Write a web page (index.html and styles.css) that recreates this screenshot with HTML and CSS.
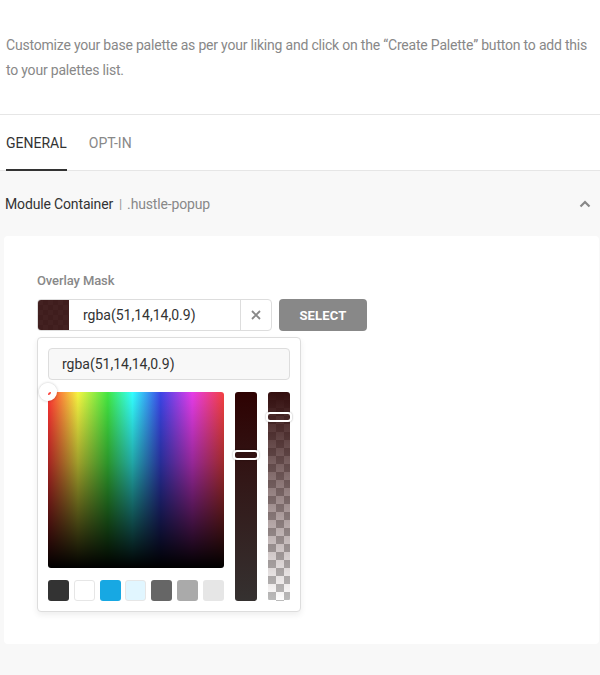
FILE: index.html
```html
<!DOCTYPE html>
<html lang="en">
<head>
<meta charset="utf-8">
<title>Palette</title>
<link rel="stylesheet" href="styles.css">
</head>
<body>
<div class="intro">
  <p class="desc">Customize your base palette as per your liking and click on the “Create Palette” button to add this to your palettes list.</p>
</div>
<nav class="tabs">
  <span class="tab active">GENERAL</span>
  <span class="tab">OPT-IN</span>
</nav>
<section class="panel">
  <header class="panel-head">
    <span class="panel-title">Module Container</span>
    <span class="sep">|</span>
    <span class="panel-sub">.hustle-popup</span>
    <svg class="chevron" width="12" height="8" viewBox="0 0 12 8"><path d="M1.5 6.5 L6 2 L10.5 6.5" fill="none" stroke="#888" stroke-width="2.2"/></svg>
  </header>
  <div class="box">
    <div class="label">Overlay Mask</div>
    <div class="field-row">
      <div class="color-input">
        <span class="swatch"><span class="swatch-fill"></span></span>
        <span class="value">rgba(51,14,14,0.9)</span>
        <span class="clear">
          <svg width="10" height="10" viewBox="0 0 10 10"><path d="M1 1 L9 9 M9 1 L1 9" stroke="#888" stroke-width="1.8"/></svg>
        </span>
      </div>
      <button class="select-btn">SELECT</button>
    </div>
    <div class="popover">
      <div class="pop-input">rgba(51,14,14,0.9)</div>
      <div class="picker">
        <div class="square">
          <span class="sq-handle"></span>
        </div>
        <div class="slider lightness"><span class="s-handle h1"></span></div>
        <div class="slider alpha"><span class="alpha-fill"></span><span class="s-handle h2"></span></div>
        <div class="palette">
          <span class="pal" style="background:#333333"></span>
          <span class="pal white" style="background:#ffffff"></span>
          <span class="pal" style="background:#17a8e3"></span>
          <span class="pal light" style="background:#e1f6ff"></span>
          <span class="pal" style="background:#666666"></span>
          <span class="pal" style="background:#aaaaaa"></span>
          <span class="pal" style="background:#e6e6e6"></span>
        </div>
      </div>
    </div>
  </div>
</section>
</body>
</html>
```

FILE: styles.css
```css
* { box-sizing: border-box; }
html, body { margin: 0; padding: 0; }
body {
  font-family: Roboto, "Liberation Sans", sans-serif;
  background: #fff;
  color: #333;
  width: 600px;
  overflow: hidden;
}
.intro {
  height: 114px;
  padding: 33px 10px 0 6px;
}
.desc {
  margin: 0;
  font-size: 14px;
  line-height: 25px;
  color: #888;
  letter-spacing: -0.2px;
}
.tabs {
  display: flex;
  gap: 22px;
  padding: 0 6px;
  border-top: 1px solid #e6e6e6;
  border-bottom: 1px solid #e6e6e6;
  height: 57px;
}
.tab {
  font-size: 14px;
  font-weight: 400;
  color: #888;
  padding-top: 20px;
  line-height: 16px;
  border-bottom: 2px solid transparent;
  margin-bottom: -1px;
}
.tab.active {
  color: #333;
  border-bottom-color: #333;
}
.panel {
  background: #f8f8f8;
  padding-bottom: 31px;
}
.panel-head {
  display: flex;
  align-items: center;
  height: 65px;
  padding: 0 5px;
  font-size: 14px;
  line-height: 18px;
  letter-spacing: -0.15px;
}
.panel-title { color: #333; }
.sep { color: #999; margin: 0 5px 0 6px; font-size: 13px; }
.panel-sub { color: #888; }
.chevron { margin-left: auto; margin-right: 4px; }
.box {
  background: #fff;
  margin: 0 1px 0 4px;
  border-radius: 4px;
  height: 408px;
  padding: 37px 33px 0 33px;
}
.label {
  font-size: 13px;
  font-weight: 500;
  color: #888;
  line-height: 16px;
  margin-bottom: 10px;
  letter-spacing: -0.1px;
}
.field-row {
  display: flex;
  gap: 7px;
}
.color-input {
  display: flex;
  align-items: center;
  width: 235px;
  height: 32px;
  border: 1px solid #ddd;
  border-radius: 4px;
  background: #fff;
}
.swatch {
  width: 31px;
  height: 30px;
  border-radius: 3px 0 0 3px;
  position: relative;
  overflow: hidden;
  background-color: #fff;
  background-image:
    linear-gradient(45deg, #ccc 25%, transparent 25%, transparent 75%, #ccc 75%),
    linear-gradient(45deg, #ccc 25%, transparent 25%, transparent 75%, #ccc 75%);
  background-size: 10px 10px;
  background-position: 0 0, 5px 5px;
}
.swatch-fill {
  position: absolute;
  inset: 0;
  background: rgba(51,14,14,0.92);
}
.value {
  flex: 1;
  font-size: 14px;
  color: #333;
  padding-left: 14px;
}
.clear {
  width: 31px;
  height: 30px;
  border-left: 1px solid #ddd;
  display: flex;
  align-items: center;
  justify-content: center;
}
.select-btn {
  width: 88px;
  height: 32px;
  border: 0;
  border-radius: 4px;
  background: #888;
  color: #fff;
  font-family: Roboto, "Liberation Sans", sans-serif;
  font-size: 13px;
  font-weight: 700;
  letter-spacing: 0.2px;
  padding: 0;
}
.popover {
  margin-top: 6px;
  width: 264px;
  border: 1px solid #ddd;
  border-radius: 4px;
  background: #fff;
  padding: 10px;
  box-shadow: 0 3px 6px rgba(0,0,0,0.07);
}
.pop-input {
  height: 32px;
  border: 1px solid #ddd;
  border-radius: 4px;
  background: #f8f8f8;
  font-size: 14px;
  line-height: 30px;
  color: #333;
  padding-left: 13px;
}
.picker {
  margin-top: 12px;
  display: grid;
  grid-template-columns: 176px 22px 22px;
  grid-template-rows: 176px 21px;
  column-gap: 11px;
  row-gap: 12px;
}
.square {
  position: relative;
  border-radius: 3px;
  background:
    linear-gradient(to bottom, rgba(0,0,0,0) 0%, rgba(0,0,0,0.35) 40%, #000 100%),
    linear-gradient(to right, #f33 0%, #f5f542 17%, #42e642 34%, #3ff 48%, #3c45e6 64%, #e53ce8 82%, #f34040 100%);
}
.sq-handle {
  position: absolute;
  left: -9px;
  top: -9px;
  width: 18px;
  height: 18px;
  border-radius: 50%;
  border: 6px solid #fff;
  box-shadow: 0 0 3px rgba(0,0,0,0.25);
}
.slider {
  position: relative;
  grid-row: 1 / span 2;
  border-radius: 3px;
}
.lightness {
  grid-column: 2;
  background: linear-gradient(to bottom, #2e0202 0%, #321616 40%, #353130 100%);
}
.alpha {
  grid-column: 3;
  background-color: #fff;
  background-image:
    linear-gradient(45deg, #bbb 25%, transparent 25%, transparent 75%, #bbb 75%),
    linear-gradient(45deg, #bbb 25%, transparent 25%, transparent 75%, #bbb 75%);
  background-size: 16px 16px;
  background-position: 0 0, 8px 8px;
}
.alpha-fill {
  position: absolute;
  inset: 0;
  border-radius: 3px;
  background: linear-gradient(to bottom, rgba(51,14,14,1), rgba(51,14,14,0));
}
.s-handle {
  position: absolute;
  left: -2px;
  width: 26px;
  height: 10px;
  border: 2px solid #fff;
  border-radius: 4px;
  box-shadow: 0 0 2px rgba(0,0,0,0.4);
}
.h1 { top: 58px; }
.h2 { top: 20px; }
.palette {
  grid-column: 1;
  grid-row: 2;
  display: flex;
  justify-content: space-between;
}
.pal {
  width: 21px;
  height: 21px;
  border-radius: 3px;
}
.pal.white, .pal.light { border: 1px solid #e6e6e6; }
```
